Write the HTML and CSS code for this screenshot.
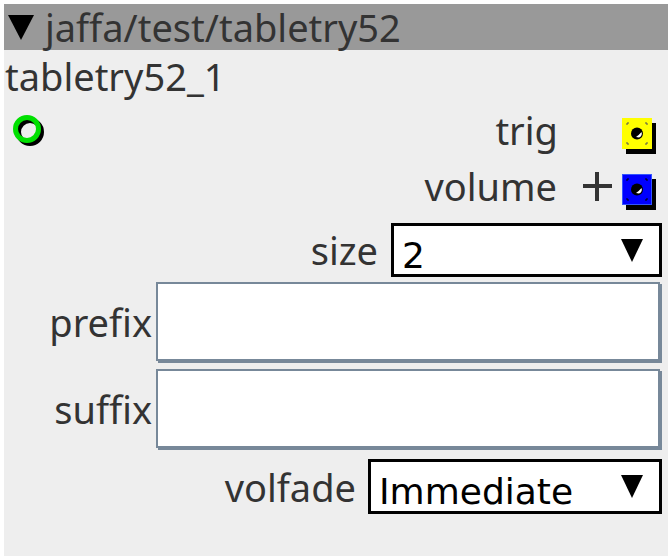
FILE: index.html
```html
<!DOCTYPE html>
<html lang="en">
<head>
  <meta charset="UTF-8">
  <title>jaffa/test/tabletry52</title>
  <link rel="stylesheet" href="styles.css">
</head>
<body>
  <div class="panel">
    <div class="header">
      <svg class="caret" width="26" height="25" viewBox="0 0 26 25"><polygon points="0,0 26,0 13,25" fill="#000"/></svg>
      <span>jaffa/test/tabletry52</span>
    </div>
    <div class="title">tabletry52_1</div>

    <!-- inlet / outlet ports -->
    <div class="port-row">
      <svg class="inlet" width="36" height="36" viewBox="0 0 36 36">
        <circle cx="19" cy="20" r="11.5" fill="none" stroke="#000" stroke-width="5"/>
        <circle cx="16" cy="17" r="11.5" fill="none" stroke="#00e000" stroke-width="5"/>
      </svg>
      <span class="port-label">trig</span>
      <svg class="port" width="36" height="38" viewBox="0 0 36 38">
        <rect x="4" y="5" width="30" height="31" fill="#000"/>
        <rect x="0" y="0" width="30" height="31" fill="#ffff00"/>
        <path d="M5 7V5H7M23 5H25V7M5 24V26H7M23 26H25V24" fill="none" stroke="#555" stroke-width="1"/>
        <circle cx="15" cy="15.5" r="6" fill="#000"/>
        <path d="M17 19.5A4 4 0 0 0 19.5 14Q17 17 14 19Z" fill="#fff"/>
      </svg>
    </div>
    <div class="port-row">
      <span class="port-label">volume</span>
      <span class="plus"></span>
      <svg class="port" width="36" height="38" viewBox="0 0 36 38">
        <rect x="4" y="5" width="30" height="31" fill="#000"/>
        <rect x="0.5" y="0.5" width="29" height="30" fill="#0000ff" stroke="#3355ff" stroke-width="1"/>
        <path d="M5 7V5H7M23 5H25V7M5 24V26H7M23 26H25V24" fill="none" stroke="#000" stroke-width="1"/>
        <circle cx="15" cy="15.5" r="6" fill="#000"/>
        <path d="M17 19.5A4 4 0 0 0 19.5 14Q17 17 14 19Z" fill="#fff"/>
      </svg>
    </div>

    <!-- parameters -->
    <div class="field field-size">
      <span class="field-label">size</span>
      <div class="select select-size">
        <span>2</span>
        <svg class="arrow" width="22" height="23" viewBox="0 0 22 23"><polygon points="0,0 22,0 11,23" fill="#000"/></svg>
      </div>
    </div>
    <div class="field field-text">
      <span class="field-label">prefix</span>
      <div class="text-input"></div>
    </div>
    <div class="field field-text">
      <span class="field-label">suffix</span>
      <div class="text-input"></div>
    </div>
    <div class="field field-volfade">
      <span class="field-label">volfade</span>
      <div class="select select-volfade">
        <span>Immediate</span>
        <svg class="arrow" width="22" height="23" viewBox="0 0 22 23"><polygon points="0,0 22,0 11,23" fill="#000"/></svg>
      </div>
    </div>
  </div>
</body>
</html>
```

FILE: styles.css
```css
/* Outer page */
body {
  margin: 4px;
  background: #fff;
}

.panel {
  height: 552px;
  background: #eee;
  color: #333;
  font-family: "Noto Sans", "DejaVu Sans", sans-serif;
  font-size: 38px;
}

.header {
  display: flex;
  align-items: center;
  height: 46px;
  padding-left: 4px;
  background: #999;
  line-height: 46px;
}

.caret {
  margin: 1px 11px 0 0;
}

.title {
  padding-left: 1px;
  line-height: 52px;
}

/* Ports */
.port-row {
  display: flex;
  align-items: center;
  justify-content: flex-end;
  height: 56px;
  padding-right: 10px;
}

.inlet {
  margin-right: auto;
  margin-left: 7px;
}

.port {
  margin-top: 14px;
}

.port-label {
  line-height: 40px;
  margin-right: 64px;
}

.port-label + .plus {
  margin-left: -38px;
  margin-right: 10px;
}

.plus {
  position: relative;
  width: 29px;
  height: 29px;
}

.plus::before,
.plus::after {
  content: "";
  position: absolute;
  background: #333;
}

.plus::before {
  left: 0;
  right: 0;
  top: 12px;
  height: 4px;
}

.plus::after {
  top: 0;
  bottom: 0;
  left: 12px;
  width: 4px;
}

/* Parameter fields */
.field {
  display: flex;
  align-items: center;
  justify-content: flex-end;
  box-sizing: border-box;
  padding-right: 6px;
}

.field-label {
  margin-right: 13px;
}

.field-size {
  height: 65px;
  padding-top: 7px;
}

.field-text {
  height: 87px;
  padding-bottom: 2px;
}

.field-text .field-label {
  margin-right: 4px;
}

.field-volfade {
  height: 67px;
}

.field-volfade .field-label {
  margin-right: 12px;
}

.select {
  display: flex;
  align-items: flex-start;
  justify-content: space-between;
  box-sizing: border-box;
  height: 54px;
  padding: 9px 16px 0 8px;
  border: 3px solid #000;
  background: #fff;
  color: #000;
  font-family: "DejaVu Sans", sans-serif;
  font-size: 36px;
}

.select-volfade {
  height: 55px;
  width: 294px;
}

.select .arrow {
  margin-top: 4px;
}

.select-size {
  width: 271px;
}

.text-input {
  box-sizing: border-box;
  width: 504px;
  height: 79px;
  margin-right: 2px;
  border: 2px solid #778899;
  box-shadow: 2px 2px 0 #778899;
  background: #fff;
}
```
